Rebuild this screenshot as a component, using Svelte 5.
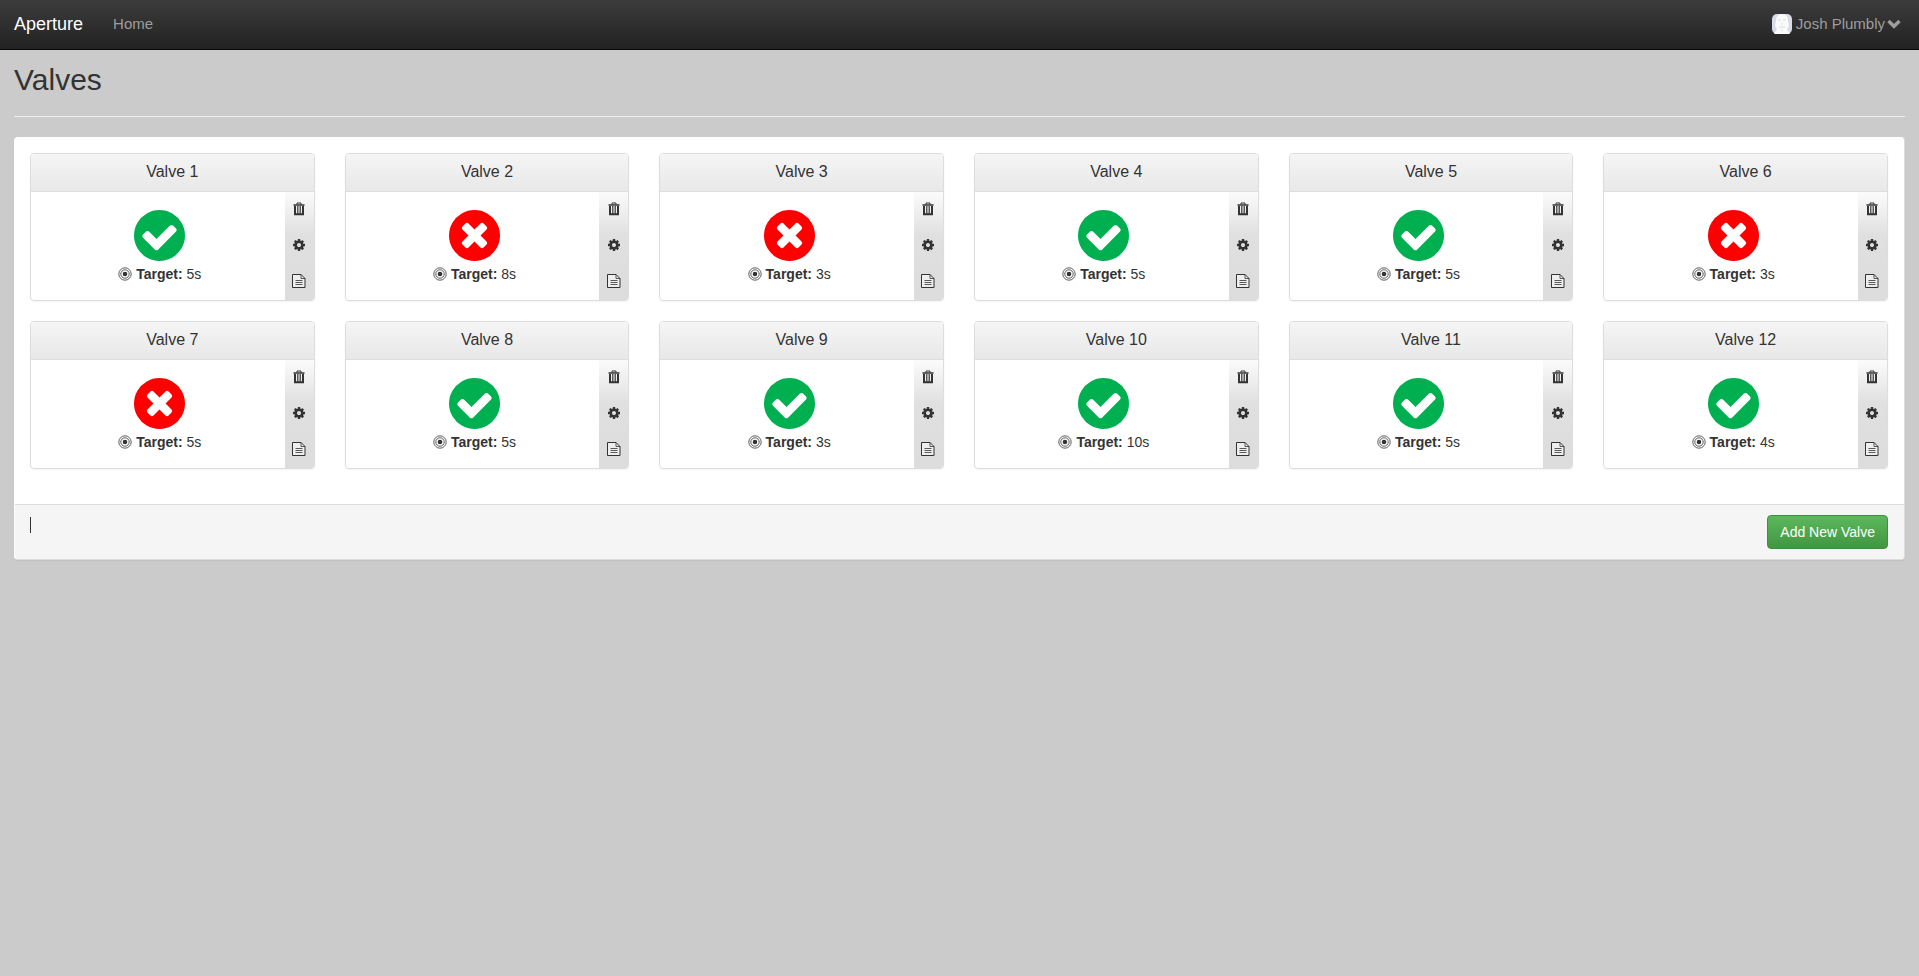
<script>
	const user = 'Josh Plumbly';

	let valves = $state([
		{ id: 1, open: true, target: 5 },
		{ id: 2, open: false, target: 8 },
		{ id: 3, open: false, target: 3 },
		{ id: 4, open: true, target: 5 },
		{ id: 5, open: true, target: 5 },
		{ id: 6, open: false, target: 3 },
		{ id: 7, open: false, target: 5 },
		{ id: 8, open: true, target: 5 },
		{ id: 9, open: true, target: 3 },
		{ id: 10, open: true, target: 10 },
		{ id: 11, open: true, target: 5 },
		{ id: 12, open: true, target: 4 }
	]);

	function toggle(valve) {
		valve.open = !valve.open;
	}

	function remove(valve) {
		valves = valves.filter((v) => v.id !== valve.id);
	}

	function addNew() {
		const id = Math.max(0, ...valves.map((v) => v.id)) + 1;
		valves.push({ id, open: false, target: 5 });
	}
</script>

<nav class="navbar">
	<div class="nav-left">
		<a class="brand" href="#top">Aperture</a>
		<a class="nav-link" href="#home">Home</a>
	</div>
	<button class="user">
		<svg class="avatar" width="20" height="20" viewBox="0 0 20 20">
			<rect width="20" height="20" rx="5" fill="#d9dbe6" />
			<path d="M4 7q0-7 6-7t6 7l1 5-2 3 3 5H2l3-5-2-3z" fill="#fafafa" />
			<path d="M6 6h3M11 6h3M9 10h2M7 13h6M10 15v2" stroke="#dcdee2" fill="none" />
		</svg>
		<span>{user}</span>
		<svg class="chevron" width="14" height="10" viewBox="0 0 14 10">
			<path d="M1.5 2L7 7.3 12.5 2" fill="none" stroke="currentColor" stroke-width="3.4" />
		</svg>
	</button>
</nav>

<main class="container">
	<h2>Valves</h2>

	<section class="panel">
		<div class="grid">
			{#each valves as valve (valve.id)}
				<article class="card">
					<h3>Valve {valve.id}</h3>
					<div class="card-body">
						<div class="status">
							<button
								class="state"
								class:open={valve.open}
								aria-label={valve.open ? 'Close valve' : 'Open valve'}
								onclick={() => toggle(valve)}
							>
								<svg width="51" height="51" viewBox="128 128 1536 1536" fill="currentColor">
									{#if valve.open}
										<path
											d="M1412 734q0-28-18-46l-91-90q-19-19-45-19t-45 19l-408 407-226-226q-19-19-45-19t-45 19l-91 90q-18 18-18 46 0 27 18 45l362 362q19 19 45 19 27 0 46-19l543-543q18-18 18-45zm252 162q0 209-103 385.5t-279.5 279.5-385.5 103-385.5-103-279.5-279.5-103-385.5 103-385.5 279.5-279.5 385.5-103 385.5 103 279.5 279.5 103 385.5z"
										/>
									{:else}
										<path
											d="M1277 1122q0-26-19-45l-181-181 181-181q19-19 19-45 0-27-19-46l-90-90q-19-19-46-19-26 0-45 19l-181 181-181-181q-19-19-45-19-27 0-46 19l-90 90q-19 19-19 46 0 26 19 45l181 181-181 181q-19 19-19 45 0 27 19 46l90 90q19 19 46 19 26 0 45-19l181-181 181 181q19 19 45 19 27 0 46-19l90-90q19-19 19-46zm387-226q0 209-103 385.5t-279.5 279.5-385.5 103-385.5-103-279.5-279.5-103-385.5 103-385.5 279.5-279.5 385.5-103 385.5 103 279.5 279.5 103 385.5z"
										/>
									{/if}
								</svg>
							</button>
							<p class="target">
								<svg width="14" height="14" viewBox="0 0 14 14" fill="none" stroke="currentColor">
									<circle cx="7" cy="7" r="6.2" stroke-width="0.8" />
									<circle cx="7" cy="7" r="4.2" stroke-width="0.8" />
									<circle cx="7" cy="7" r="2.3" fill="currentColor" stroke="none" />
								</svg>
								<span><b>Target:</b> {valve.target}s</span>
							</p>
						</div>
						<div class="tools">
							<button aria-label="Delete" onclick={() => remove(valve)}>
								<svg width="12" height="14" viewBox="0 0 12 14" fill="none" stroke="currentColor">
									<path d="M4 2.5V1h4v1.5" />
									<path d="M.5 3h11" stroke-width="1.6" />
									<path d="M2 4v8.2h8V4" stroke-width="2" />
									<path d="M4.5 4v8M6 4v8M7.5 4v8" stroke-width="0.8" />
								</svg>
							</button>
							<button aria-label="Settings">
								<svg width="14" height="14" viewBox="0 0 1792 1792" fill="currentColor">
									<path
										d="M1152 896q0-106-75-181t-181-75-181 75-75 181 75 181 181 75 181-75 75-181zm512-109v222q0 12-8 23t-20 13l-185 28q-19 54-39 91 35 50 107 138 10 12 10 25t-9 23q-27 37-99 108t-94 71q-12 0-26-9l-138-108q-44 23-91 38-16 136-29 186-7 28-36 28h-222q-14 0-24.5-8.5t-11.5-21.5l-28-184q-49-16-90-37l-141 107q-10 9-25 9-14 0-25-11-126-114-165-168-7-10-7-23 0-12 8-23 15-21 51-66.5t54-70.5q-27-50-41-99l-183-27q-13-2-21-12.5t-8-23.5v-222q0-12 8-23t19-13l186-28q14-46 39-92-40-57-107-138-10-12-10-24 0-10 9-23 26-36 98.5-107.5t94.5-71.5q13 0 26 10l138 107q44-23 91-38 16-136 29-186 7-28 36-28h222q14 0 24.5 8.5t11.5 21.5l28 184q49 16 90 37l142-107q9-9 24-9 13 0 25 10 129 119 165 170 7 8 7 22 0 12-8 23-15 21-51 66.5t-54 70.5q26 50 41 98l183 28q13 2 21 12.5t8 23.5z"
									/>
								</svg>
							</button>
							<button aria-label="Log">
								<svg width="14" height="14" viewBox="0 0 14 14" fill="none" stroke="currentColor">
									<path d="M.5.5h8.5l4 4v9H.5z" fill="#eee" />
									<path d="M9 .5v4h4" stroke-width="0.8" />
									<path d="M3.5 6.5h7M3.5 8.5h7M3.5 10.5h7" stroke-width="0.8" />
								</svg>
							</button>
						</div>
					</div>
				</article>
			{/each}
		</div>

		<footer>
			<span class="marker"></span>
			<button class="add" onclick={addNew}>Add New Valve</button>
		</footer>
	</section>
</main>

<style>
	:global(body) {
		background: #cbcbcb;
		color: #333;
		font: 14px/20px 'Liberation Sans', Arial, sans-serif;
	}

	button {
		margin: 0;
		padding: 0;
		border: none;
		background: none;
		color: inherit;
		font: inherit;
		cursor: pointer;
	}

	svg {
		display: block;
		flex: none;
	}

	.navbar {
		display: flex;
		align-items: center;
		justify-content: space-between;
		box-sizing: border-box;
		height: 50px;
		padding: 0 18px 2px 14px;
		border-bottom: 1px solid #080808;
		background: linear-gradient(#3c3c3c, #222);
		color: #9d9d9d;
		font-size: 15px;
	}

	.nav-left {
		display: flex;
		align-items: center;
		gap: 30px;
	}

	.nav-left a {
		color: inherit;
		text-decoration: none;
	}

	.nav-left .brand {
		color: #fff;
		font-size: 18px;
	}

	.user {
		display: flex;
		align-items: center;
		gap: 4px;
	}

	.chevron {
		margin-left: -2px;
	}

	.container {
		padding: 13px 14px 20px;
	}

	h2 {
		margin: 0 0 20px;
		padding-bottom: 20px;
		border-bottom: 1px solid #eee;
		font-size: 30px;
		font-weight: normal;
		line-height: 33px;
	}

	.panel {
		border: 1px solid #ddd;
		border-top-color: #fff;
		border-left-color: #fff;
		border-radius: 4px;
		background: #fff;
		box-shadow: 0 1px 2px rgba(0, 0, 0, 0.05);
	}

	.grid {
		display: grid;
		grid-template-columns: repeat(6, 1fr);
		gap: 20px 30px;
		padding: 15px 16px 35px 15px;
	}

	.card {
		overflow: hidden;
		border: 1px solid #ddd;
		border-radius: 4px;
		box-shadow: 0 1px 2px rgba(0, 0, 0, 0.05);
	}

	h3 {
		margin: 0;
		padding: 8px 15px 9px;
		border-bottom: 1px solid #ddd;
		background: linear-gradient(#f5f5f5, #e8e8e8);
		font-size: 16px;
		font-weight: normal;
		line-height: 20px;
		text-align: center;
	}

	.card-body {
		display: flex;
	}

	.status {
		display: flex;
		flex: 1;
		flex-direction: column;
		align-items: center;
		gap: 3px;
		padding: 18px 0 0 4px;
	}

	.state {
		color: #f00;
	}

	.state.open {
		color: #00b050;
	}

	.target {
		display: flex;
		align-items: center;
		gap: 4px;
		margin: 0;
	}

	.tools {
		display: flex;
		flex-direction: column;
		width: 29px;
		background: linear-gradient(#fbfbfb, #e0e0e0 40%, #dcdcdc);
	}

	.tools button {
		display: flex;
		align-items: center;
		justify-content: center;
		box-sizing: border-box;
		height: 36px;
		padding-bottom: 2px;
	}

	footer {
		display: flex;
		justify-content: space-between;
		padding: 10px 16px 10px 15px;
		border-top: 1px solid #ddd;
		border-radius: 0 0 3px 3px;
		background: #f5f5f5;
	}

	.marker {
		width: 1px;
		height: 16px;
		margin-top: 2px;
		background: #333;
	}

	.add {
		padding: 6px 12px;
		border: 1px solid #3e8f3e;
		border-radius: 4px;
		background: linear-gradient(#5cb85c, #419641);
		color: #fff;
	}
</style>
